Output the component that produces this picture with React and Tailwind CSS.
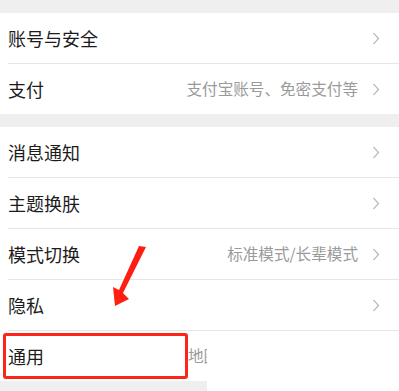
import React from "react";

const font = { fontFamily: '"Noto Sans CJK SC", "Noto Sans", sans-serif' };

function Chevron() {
  return (
    <svg width="8" height="13" viewBox="0 0 8 13" className="shrink-0">
      <polyline points="1.5,1 6.5,6.5 1.5,12" fill="none" stroke="#bdbdbd" strokeWidth="1.3" />
    </svg>
  );
}

function Row({ title, detail, divider = true }) {
  return (
    <div className="flex flex-col bg-white">
      <div className="flex h-[50px] items-center pl-[8px] pr-[19px]">
        <span className="text-[18px] text-[#1c1c1c] leading-none">{title}</span>
        <div className="flex-1" />
        {detail && <span className="mr-[14px] text-[15.6px] text-[#9a9a9a] leading-none">{detail}</span>}
        <Chevron />
      </div>
      {divider && <div className="ml-[8px] h-px bg-[#e6e6e6]" />}
    </div>
  );
}

export default function App() {
  return (
    <div className="relative h-[391px] w-[399px] overflow-hidden bg-white" style={font}>
      <div className="h-[13px] bg-[#efefef]" />
      <Row title="账号与安全" />
      <Row title="支付" detail="支付宝账号、免密支付等" divider={false} />
      <div className="h-[13px] bg-[#efefef]" />
      <Row title="消息通知" />
      <Row title="主题换肤" />
      <Row title="模式切换" detail="标准模式/长辈模式" />
      <Row title="隐私" />
      <div className="flex h-[50px] items-center bg-white pl-[8px]">
        <span className="text-[18px] text-[#1c1c1c] leading-none">通用</span>
        <div className="ml-[144px] w-[19px] overflow-hidden whitespace-nowrap text-[15.6px] text-[#9a9a9a] leading-none">地图</div>
      </div>
      <div className="h-[11px] w-[207px] bg-[#efefef]" />

      <div className="absolute left-[3px] top-[333px] h-[46px] w-[185px] rounded-[3px] border-[3px] border-[#ff2418]" />

      <svg className="absolute left-0 top-0" width="399" height="391" viewBox="0 0 399 391">
        <polygon points="139,246 146,247 123,293 129,299 115,306 113,287 119,290" fill="#ff1e12" />
      </svg>
    </div>
  );
}
